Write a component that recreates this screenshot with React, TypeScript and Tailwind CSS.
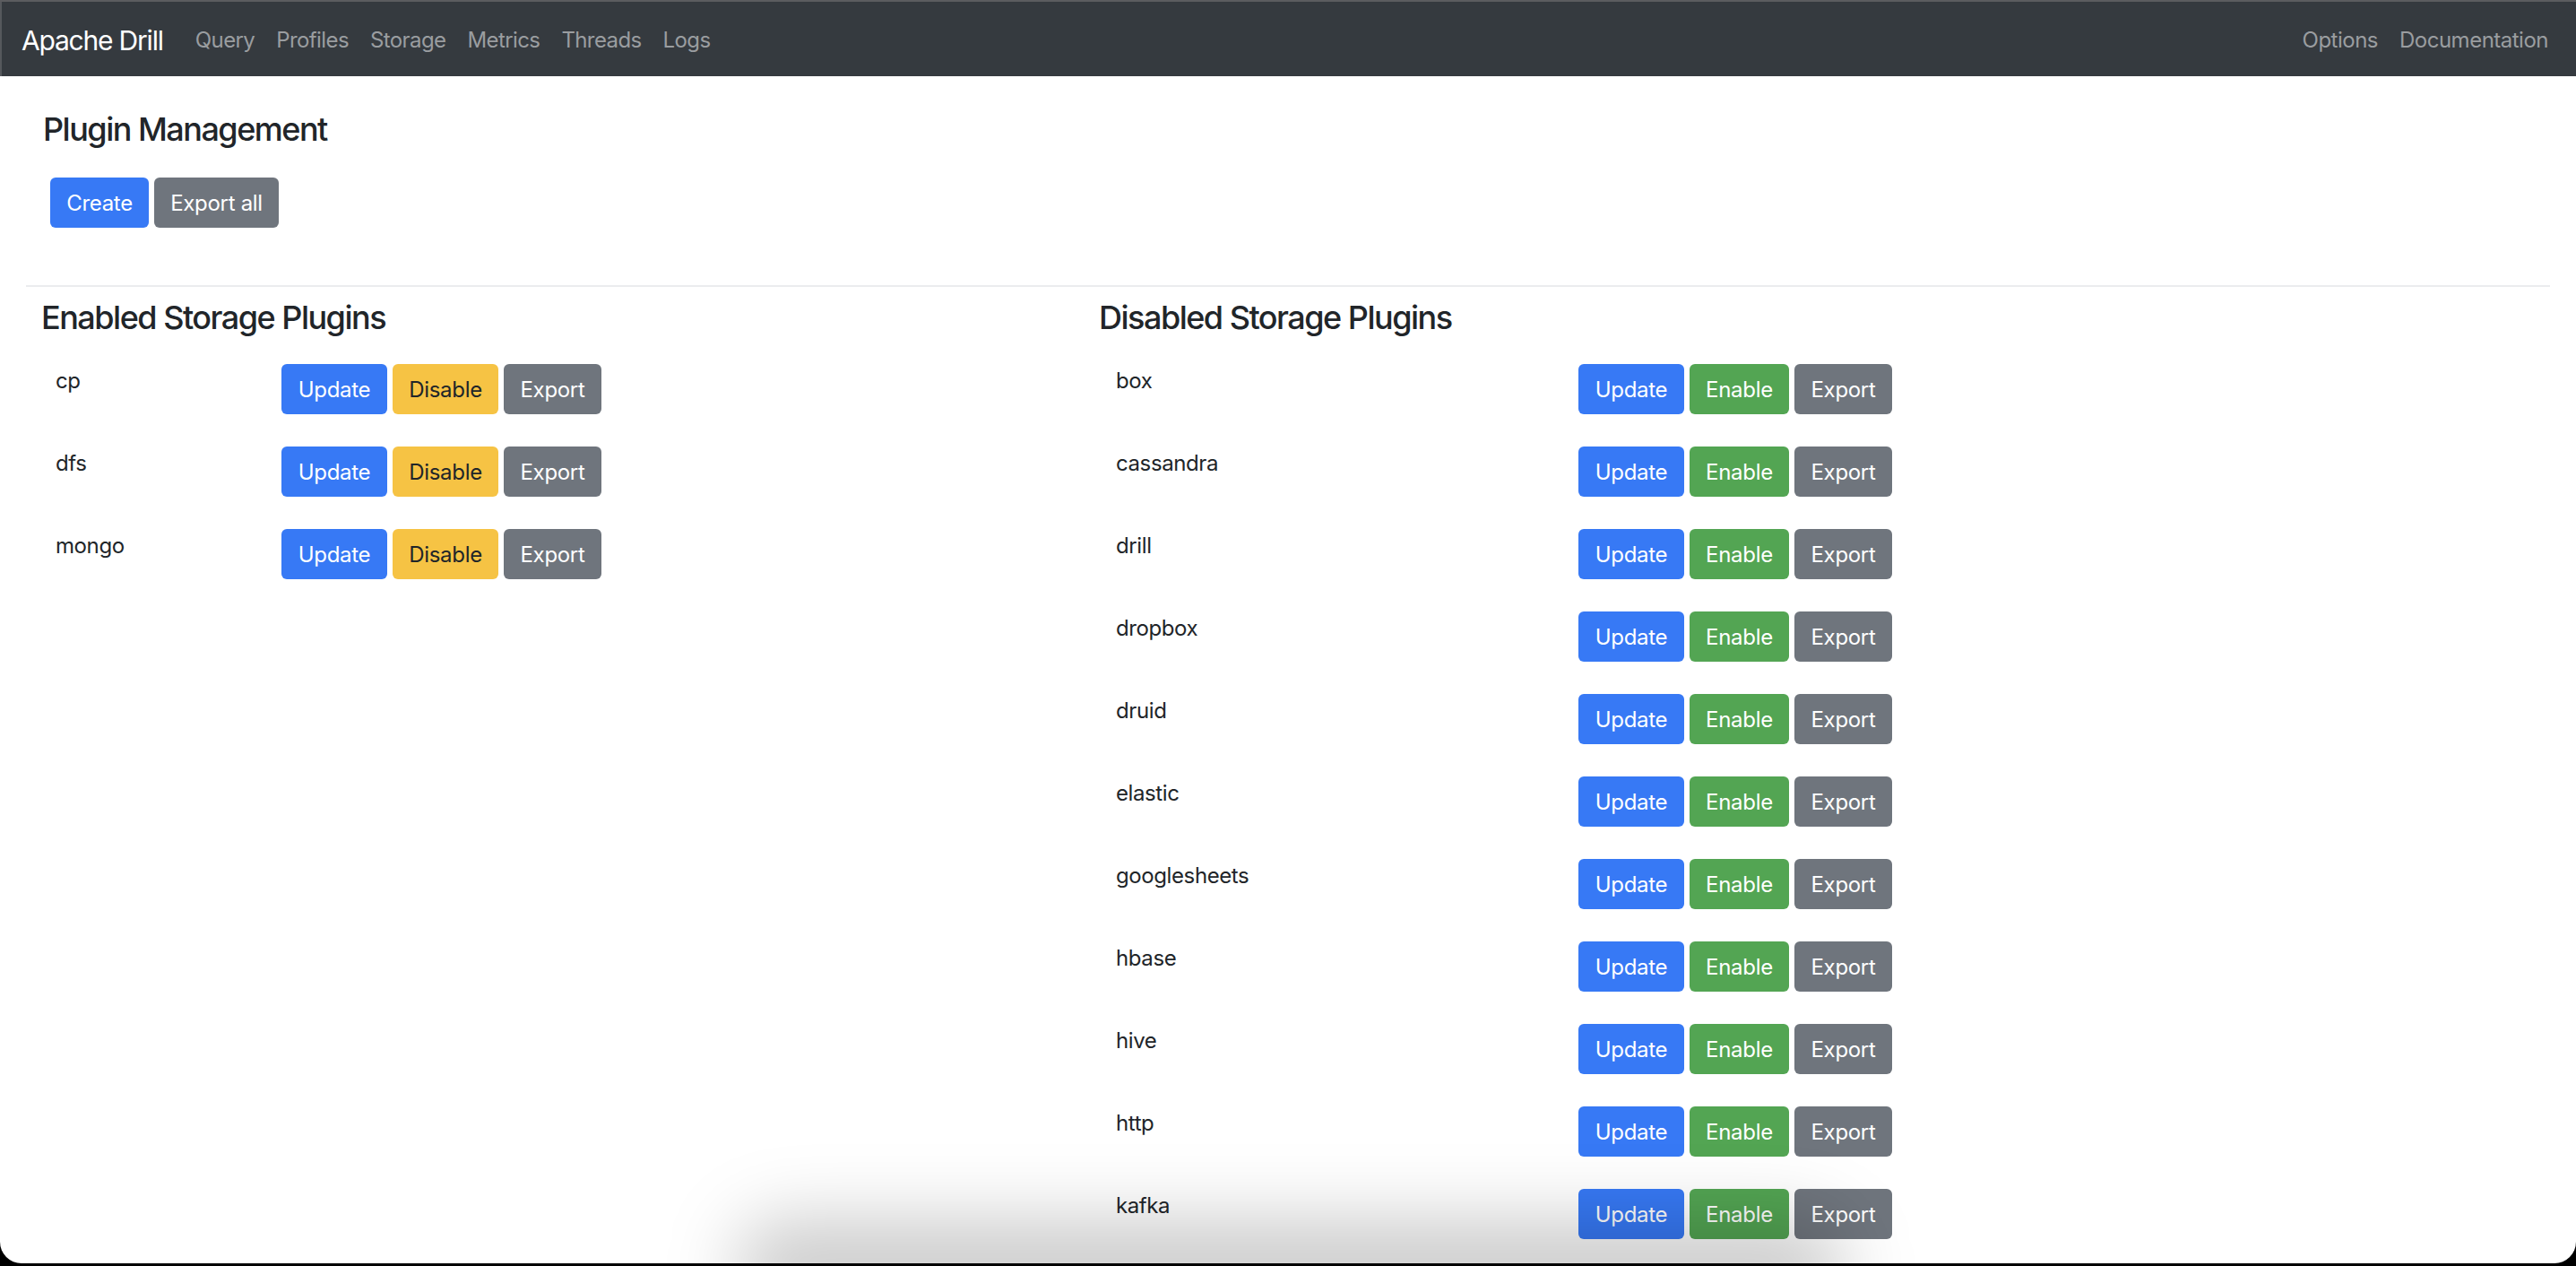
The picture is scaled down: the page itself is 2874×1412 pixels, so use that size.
import React from "react";

const enabledPlugins = ["cp", "dfs", "mongo"];
const disabledPlugins = [
  "box",
  "cassandra",
  "drill",
  "dropbox",
  "druid",
  "elastic",
  "googlesheets",
  "hbase",
  "hive",
  "http",
  "kafka",
];

const navLinks = ["Query", "Profiles", "Storage", "Metrics", "Threads", "Logs"];

const Btn: React.FC<{ label: string; className: string }> = ({ label, className }) => (
  <button
    className={`h-[56px] rounded-[6px] text-[24px] leading-[36px] tracking-[-0.3px] flex items-center justify-center pt-[1px] ${className}`}
  >
    {label}
  </button>
);

const PluginRow: React.FC<{ name: string; enabled: boolean }> = ({ name, enabled }) => (
  <div className="flex items-start h-[92px]">
    <div
      className={`${enabled ? "w-[268px] pl-[16px]" : "w-[535px] pl-[19px]"} pt-[5px] text-[24px] leading-[36px] tracking-[-0.4px] text-[#212529]`}
    >
      {name}
    </div>
    <div className="flex gap-[6px] mt-[4px]">
      <Btn label="Update" className="w-[118px] bg-[#3779f5] text-white" />
      {enabled ? (
        <Btn label="Disable" className="w-[118px] bg-[#f6c344] text-[#212529]" />
      ) : (
        <Btn label="Enable" className="w-[111px] bg-[#53a553] text-white" />
      )}
      <Btn label="Export" className="w-[109px] bg-[#6f757d] text-white" />
    </div>
  </div>
);

export default function App() {
  return (
    <div
      className="h-[1412px] bg-black overflow-hidden"
      style={{ fontFamily: "Inter, 'Noto Sans', sans-serif" }}
    >
      <div className="relative h-[1409px] bg-white rounded-b-[24px] overflow-hidden border-t-2 border-[#5b5c5f]">
        {/* navbar */}
        <nav className="h-[83px] bg-[#353a3f] border-l-2 border-[#55585c] flex items-center pl-[22px] pr-[19px] pt-[3px]">
          <span className="text-[30px] leading-[45px] tracking-[-1.2px] text-white mr-[24px]">Apache Drill</span>
          <div className="flex">
            {navLinks.map((l) => (
              <span key={l} className="px-[12px] text-[24px] leading-[36px] tracking-[-0.6px] text-[#9a9da0]">
                {l}
              </span>
            ))}
          </div>
          <div className="flex ml-auto">
            <span className="px-[12px] text-[24px] leading-[36px] tracking-[-0.5px] text-[#9a9da0]">Options</span>
            <span className="px-[12px] text-[24px] leading-[36px] tracking-[-0.5px] text-[#9a9da0]">Documentation</span>
          </div>
        </nav>

        {/* header */}
        <div className="pl-[48px] pt-[38px]">
          <h3 className="text-[36px] leading-[43px] font-medium tracking-[-1.5px] text-[#212529]">Plugin Management</h3>
          <div className="flex gap-[6px] pl-[8px] mt-[32px]">
            <Btn label="Create" className="w-[110px] bg-[#3779f5] text-white" />
            <Btn label="Export all" className="w-[139px] bg-[#6f757d] text-white" />
          </div>
        </div>

        <div className="mx-[29px] mt-[64px] h-[2px] bg-[#ebecee]" />

        {/* plugin columns */}
        <div className="flex mt-[13px]">
          <div className="w-[1226px] pl-[46px]">
            <h4 className="text-[36px] leading-[43px] font-medium tracking-[-1.5px] text-[#212529] mb-[26px]">
              Enabled Storage Plugins
            </h4>
            {enabledPlugins.map((p) => (
              <PluginRow key={p} name={p} enabled />
            ))}
          </div>
          <div className="flex-1">
            <h4 className="text-[36px] leading-[43px] font-medium tracking-[-1.5px] text-[#212529] mb-[26px]">
              Disabled Storage Plugins
            </h4>
            {disabledPlugins.map((p) => (
              <PluginRow key={p} name={p} enabled={false} />
            ))}
          </div>
        </div>

        {/* soft shadow at the bottom edge */}
        <div className="pointer-events-none absolute left-[820px] bottom-[-60px] w-[1240px] h-[110px] bg-black/20 blur-[40px] rounded-full" />
      </div>
    </div>
  );
}
